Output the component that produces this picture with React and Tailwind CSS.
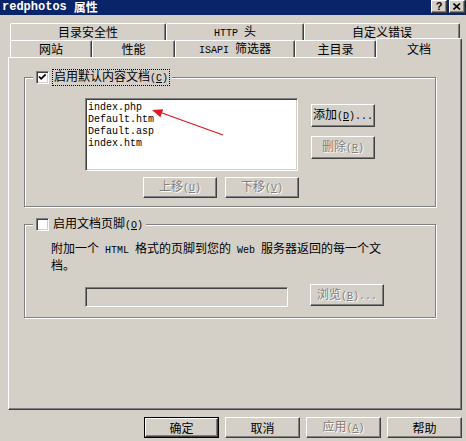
import React from "react";

// Latin runs in the old SimSun dialogs are half-width: 6px per char
const M = ({ children }) => (
  <span className="font-['Liberation_Mono',monospace] text-[10px]">{children}</span>
);

const raised =
  "border border-white border-r-[#404040] border-b-[#404040] shadow-[inset_-1px_-1px_0_#808080]";
const sunken =
  "border border-[#808080] border-r-white border-b-white shadow-[inset_1px_1px_0_#404040,inset_-1px_-1px_0_#d4d0c8]";
const grey = "text-[#808080] [text-shadow:1px_1px_0_#fff]";

const Button = ({ className = "", disabled, children }) => (
  <div
    className={`${raised} flex items-center justify-center leading-[12px] ${
      disabled ? grey : "text-black"
    } ${className}`}
  >
    <span>{children}</span>
  </div>
);

const CheckBox = ({ checked }) => (
  <div className={`${sunken} w-[13px] h-[13px] bg-white shrink-0`}>
    {checked && (
      <svg width="11" height="11" viewBox="0 0 11 11" className="block">
        <path d="M2 4.5 L4.2 6.8 L8.6 2.4" fill="none" stroke="#000" strokeWidth="1.8" />
      </svg>
    )}
  </div>
);

const Tab = ({ className = "", children }) => (
  <div
    className={`h-[17px] flex items-center justify-center border-t border-l border-white border-r border-r-[#404040] shadow-[inset_-1px_0_0_#808080] rounded-t-[2px] leading-[12px] whitespace-pre ${className}`}
  >
    <span>{children}</span>
  </div>
);

export default function App() {
  return (
    <div className="w-[466px] h-[441px] bg-[#d4d0c8] overflow-hidden flex flex-col text-[12px] text-black font-['Noto_Sans_CJK_SC',sans-serif]">
      {/* title bar */}
      <div className="h-[15px] bg-[#0a246a] flex items-start justify-between pl-[2px] pr-[1px]">
        <div className="flex items-center text-white font-bold leading-[14px] text-[12px]">
          <span className="font-['Liberation_Mono',monospace]">redphotos</span>
          <span className="ml-[7px]">属性</span>
        </div>
        <div className="flex items-start gap-[2px]">
          <div className={`${raised} bg-[#d4d0c8] w-[16px] h-[13px] flex items-center justify-center text-[11px] font-bold leading-none font-['Liberation_Sans',sans-serif]`}>
            ?
          </div>
          <div className={`${raised} bg-[#d4d0c8] w-[16px] h-[13px] flex items-center justify-center`}>
            <svg width="8" height="7" viewBox="0 0 8 7">
              <path d="M0.5 0.5 L7 6.5 M7 0.5 L0.5 6.5" stroke="#000" strokeWidth="1.6" />
            </svg>
          </div>
        </div>
      </div>

      {/* tabs */}
      <div className="pt-[8px] pl-[10px]">
        <div className="flex">
          <Tab className="w-[156px]">目录安全性</Tab>
          <Tab className="w-[138px]">
            <M>HTTP </M>头
          </Tab>
          <Tab className="w-[156px]">自定义错误</Tab>
        </div>
        <div className="flex h-[17px] items-start">
          <Tab className="w-[82px]">网站</Tab>
          <Tab className="w-[83px]">性能</Tab>
          <Tab className="w-[120px]">
            <M>ISAPI </M>筛选器
          </Tab>
          <Tab className="w-[81px]">主目录</Tab>
          <Tab className="relative z-10 w-[86px] !h-[20px] -mt-[2px] bg-[#d4d0c8] items-start pt-[4px]">
            文档
          </Tab>
        </div>
      </div>

      {/* page */}
      <div className={`${raised} ml-[8px] w-[454px] h-[353px] flex flex-col`}>
        {/* default document group */}
        <div className="relative mt-[19px] ml-[15px] w-[412px] h-[130px] border border-[#808080] shadow-[inset_1px_1px_0_#fff,1px_1px_0_#fff]">
          <div className="absolute left-[8px] -top-[7px] h-[13px] flex items-center bg-[#d4d0c8] pl-[3px] pr-[2px]">
            <CheckBox checked />
            <span className="ml-[3px] border border-dotted border-black px-[1px] leading-[12px]">
              启用默认内容文档<M>(<u>C</u>)</M>
            </span>
          </div>
          <div className="pl-[60px] pt-[20px]">
            <div className="flex items-start">
              <div className={`${sunken} relative w-[213px] h-[73px] bg-white pl-[2px] pt-[3px] font-['Liberation_Mono',monospace] text-[10px] leading-[12px]`}>
                <div>index.php</div>
                <div>Default.htm</div>
                <div>Default.asp</div>
                <div>index.htm</div>
                <svg className="absolute -left-px -top-px" width="213" height="73" viewBox="0 0 213 73">
                  <path d="M138 37 L77 15" stroke="#e0181f" strokeWidth="1.3" />
                  <path d="M67 12 L78.2 11.2 L75.4 19.3 Z" fill="#e0181f" />
                </svg>
              </div>
              <div className="ml-[13px] mt-[6px] flex flex-col gap-[9px]">
                <Button className="w-[64px] h-[23px]">
                  添加<M>(<u>D</u>)...</M>
                </Button>
                <Button disabled className="w-[64px] h-[23px]">
                  删除<M>(<u>R</u>)</M>
                </Button>
              </div>
            </div>
            <div className="mt-[6px] ml-[58px] flex gap-[8px]">
              <Button disabled className="w-[74px] h-[21px]">
                上移<M>(<u>U</u>)</M>
              </Button>
              <Button disabled className="w-[74px] h-[21px]">
                下移<M>(<u>V</u>)</M>
              </Button>
            </div>
          </div>
        </div>

        {/* footer group */}
        <div className="relative mt-[17px] ml-[15px] w-[412px] h-[94px] border border-[#808080] shadow-[inset_1px_1px_0_#fff,1px_1px_0_#fff]">
          <div className="absolute left-[8px] -top-[7px] h-[13px] flex items-center bg-[#d4d0c8] pl-[3px] pr-[3px]">
            <CheckBox />
            <span className="ml-[4px] leading-[12px]">
              启用文档页脚<M>(<u>O</u>)</M>
            </span>
          </div>
          <div className="pl-[26px] pt-[16px]">
            <div className="leading-[14px] whitespace-nowrap">
              附加一个<M> HTML </M>格式的页脚到您的<M> Web </M>服务器返回的每一个文
              <br />
              档。
            </div>
            <div className="mt-[12px] flex items-start">
              <div className={`${sunken} ml-[34px] mt-[3px] w-[203px] h-[20px] bg-[#d4d0c8]`} />
              <Button disabled className="ml-[22px] w-[74px] h-[22px]">
                浏览<M>(<u>B</u>)...</M>
              </Button>
            </div>
          </div>
        </div>
      </div>

      {/* dialog buttons */}
      <div className="mt-[7px] ml-[144px] flex gap-[6px]">
        <div className="w-[75px] h-[21px] border border-black flex">
          <div className={`${raised} flex-1 flex items-center justify-center leading-[12px]`}>确定</div>
        </div>
        <Button className="w-[75px] h-[21px]">取消</Button>
        <Button disabled className="w-[75px] h-[21px]">
          应用<M>(<u>A</u>)</M>
        </Button>
        <Button className="w-[75px] h-[21px]">帮助</Button>
      </div>
    </div>
  );
}
